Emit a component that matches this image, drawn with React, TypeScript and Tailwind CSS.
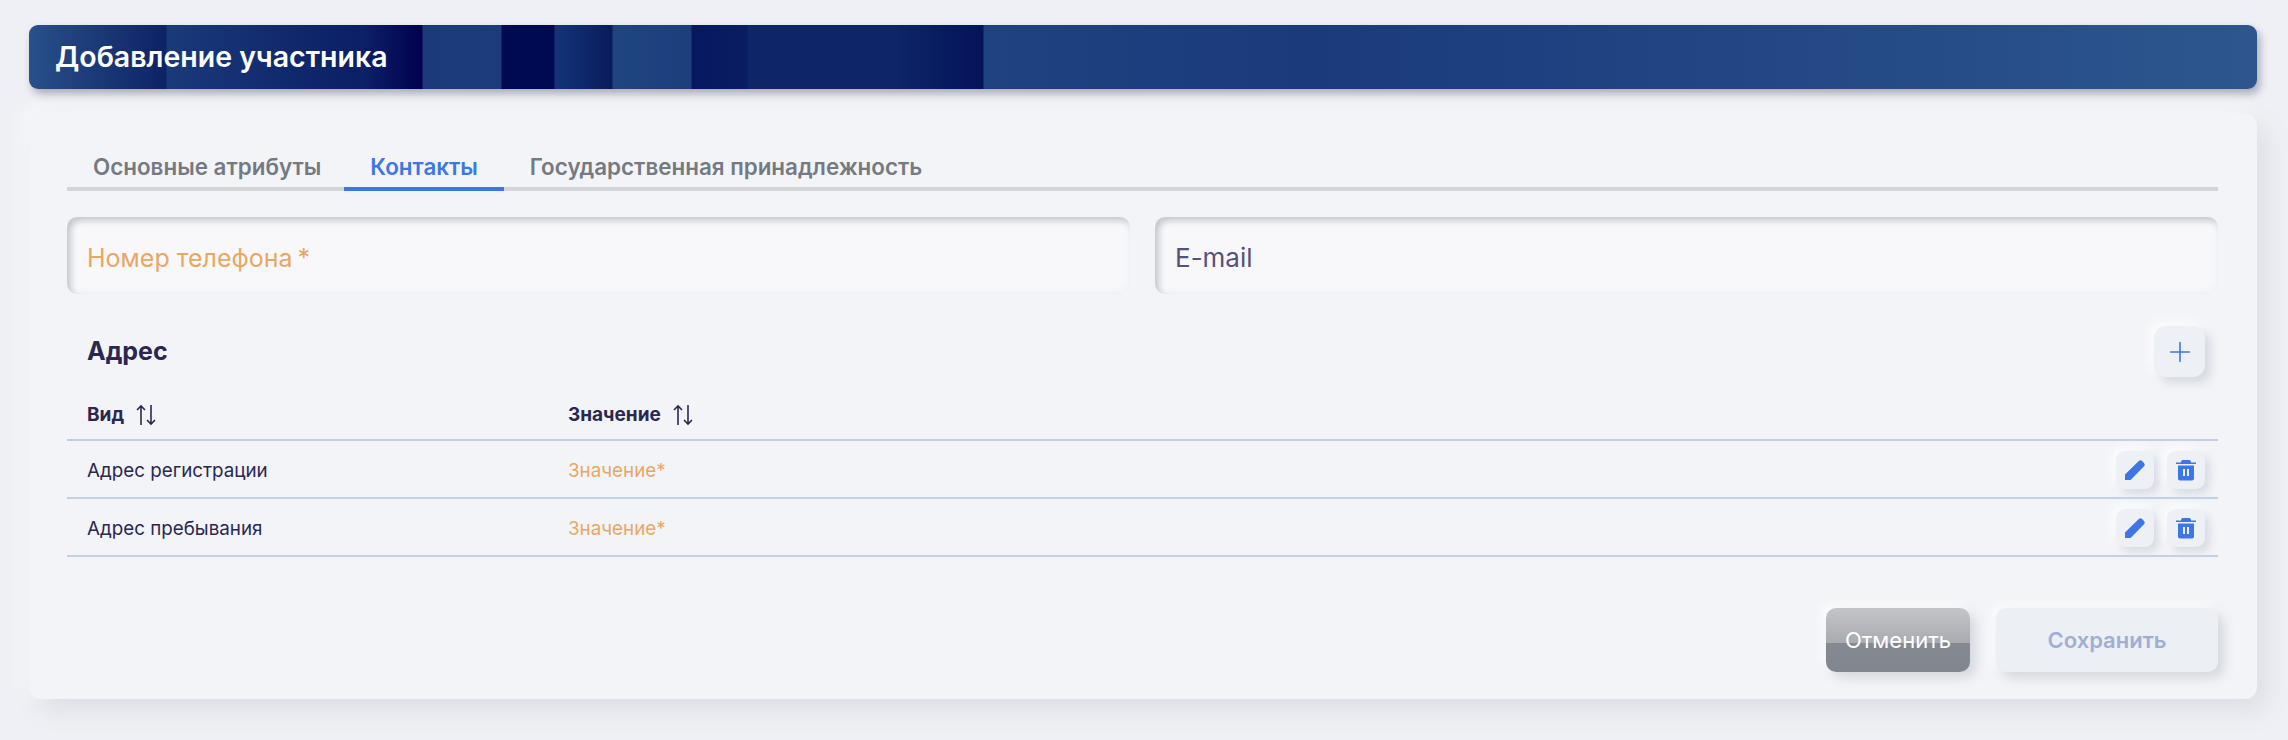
import { Plus } from "lucide-react";

const fieldClass =
  "flex-1 h-[77px] rounded-[10px] bg-[#f8f8fb] shadow-[inset_4px_4px_6px_#c4c9cf,inset_-4px_-4px_6px_#f3f4f8] px-5 flex items-center";

function SortIcon() {
  return (
    <svg width="22" height="24" viewBox="0 0 22 24" fill="none" stroke="#2a2850" strokeWidth="1.6" className="ml-[11px]">
      <path d="M6 22V3M2 7l4-4 4 4" />
      <path d="M16 2v19M12 17l4 4 4-4" />
    </svg>
  );
}

function EditIcon() {
  return (
    <svg width="22" height="22" viewBox="0 0 22 22" fill="#3d76e8">
      <path d="M1 21v-5.500L14.800 2a2.300 2.300 0 0 1 3.300 0l1.900 1.900a2.300 2.300 0 0 1 0 3.300L6.600 21H1z" />
    </svg>
  );
}

function TrashIcon() {
  return (
    <svg width="22" height="22" viewBox="0 0 22 22">
      <path fill="#3d76e8" d="M6 3.500C6 1.600 7 1 8 1h6c1 0 2 .6 2 2.500h5v1.500H1V3.500h5z" />
      <path fill="#3d76e8" d="M3 6.500h16V19.500a2 2 0 0 1-2 2H5a2 2 0 0 1-2-2V6.500z" />
      <rect x="8" y="10" width="2" height="7" fill="#eef1f6" />
      <rect x="12" y="10" width="2" height="7" fill="#eef1f6" />
    </svg>
  );
}

function Row({ label }: { label: string }) {
  return (
    <div className="flex h-[58px] items-center border-b-2 border-[#c3d0e0] pl-5 text-[18.800px]">
      <span className="w-[481px] pt-[4px] text-[#2a2850]">{label}</span>
      <span className="pt-[4px] text-[#e9a764]">Значение*</span>
      <div className="mt-[2px] ml-auto mr-[13px] flex gap-[13px]">
        <button className="flex h-[38px] w-[38px] items-center justify-center rounded-[9px] bg-[#edf0f4] shadow-[5px_5px_9px_#d8dce3,-4px_-4px_8px_#fbfcfd]">
          <EditIcon />
        </button>
        <button className="flex h-[38px] w-[38px] items-center justify-center rounded-[9px] bg-[#edf0f4] shadow-[5px_5px_9px_#d8dce3,-4px_-4px_8px_#fbfcfd]">
          <TrashIcon />
        </button>
      </div>
    </div>
  );
}

export default function App() {
  return (
    <div className="h-[740px] bg-[#eff0f5] pt-[25px] pl-[29px] pr-[31px] font-['Inter',sans-serif]">
      <div className="flex h-[64px] items-center rounded-[9px] pl-[26px] text-[28.500px] font-semibold text-white shadow-[3px_5px_8px_#a9adb7] bg-[linear-gradient(90deg,#28508a_0px,#0e2265_137px,#1a3a7a_138px,#0b1f66_330px,#0d2268_332px,#00004f_393px,#1a3a7a_394px,#1c3d7c_472px,#000a52_473px,#000a52_525px,#14347a_526px,#0a1b5c_583px,#1f4581_584px,#1c3f7c_662px,#061860_663px,#0a1c62_718px,#0e2668_719px,#0e2668_860px,#05135a_954px,#1f4280_955px,#1a3a7c_1280px,#1e4080_1500px,#2d568e_100%)]">
        Добавление участника
      </div>

      <div className="mt-[25px] h-[585px] rounded-[12px] bg-[#f3f4f8] pl-[38px] pr-[39px] pt-[16px] shadow-[10px_12px_24px_#dcdfe5,-8px_-6px_16px_#f7f8fa]">
        <div className="flex h-[61px] border-b-[4px] border-[#d3d5da] text-[22.400px] font-semibold text-[#757a82]">
          <div className="flex items-end pl-[26px] pr-[23px] pb-[3px]">Основные атрибуты</div>
          <div className="-mb-[4px] flex items-end border-b-[4px] border-[#3d76e8] px-[26px] pb-[3px] text-[#3d76e8]">Контакты</div>
          <div className="flex items-end px-[26px] pb-[3px]">Государственная принадлежность</div>
        </div>

        <div className="mt-[26px] flex gap-[25px]">
          <div className={fieldClass + " pt-[6px] text-[25px] text-[#e9a764]"}>Номер телефона<span className="ml-[5px]">*</span></div>
          <div className={fieldClass + " pt-[3px] text-[26px] text-[#54527a]"}>E-mail</div>
        </div>

        <div className="mt-[32px] flex h-[51px] items-center justify-between pl-5 pr-[13px]">
          <h2 className="text-[25px] font-bold text-[#2a2850]">Адрес</h2>
          <button className="flex h-[51px] w-[51px] items-center justify-center rounded-[12px] bg-[#edf0f4] shadow-[6px_6px_10px_#d6dae1,-5px_-5px_10px_#fbfcfd]">
            <Plus size={32} strokeWidth={1.2} color="#3d76e8" />
          </button>
        </div>

        <div className="mt-[12px] flex h-[52px] items-center border-b-2 border-[#c4cce2] pl-5 pt-[2px] text-[19px] font-bold text-[#2a2850]">
          <div className="flex w-[481px] items-center">Вид <SortIcon /></div>
          <div className="flex items-center">Значение <SortIcon /></div>
        </div>
        <Row label="Адрес регистрации" />
        <Row label="Адрес пребывания" />

        <div className="mt-[51px] flex justify-end gap-[26px]">
          <button className="h-[64px] w-[144px] rounded-[10px] text-[22px] text-white shadow-[6px_6px_12px_#d4d8df,-4px_-4px_8px_#fbfcfd] bg-[linear-gradient(180deg,#c3c5c9_0%,#a8abb0_54%,#858a92_55%,#82878f_100%)]">
            Отменить
          </button>
          <button className="h-[64px] w-[222px] rounded-[10px] bg-[#ecf0f4] text-[22px] font-semibold text-[#a1aed4] shadow-[6px_6px_12px_#d4d8df,-4px_-4px_8px_#fbfcfd]">
            Сохранить
          </button>
        </div>
      </div>
    </div>
  );
}
